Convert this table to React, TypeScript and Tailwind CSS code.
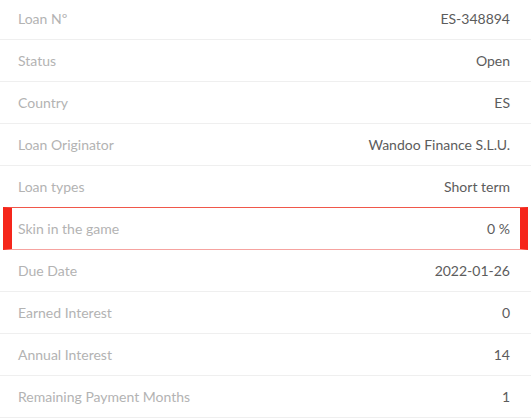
import React from 'react';

interface Row {
    label: string;
    value: string;
    highlight?: boolean;
}

const rows: Row[] = [
    { label: 'Loan Nº', value: 'ES-348894' },
    { label: 'Status', value: 'Open' },
    { label: 'Country', value: 'ES' },
    { label: 'Loan Originator', value: 'Wandoo Finance S.L.U.' },
    { label: 'Loan types', value: 'Short term' },
    { label: 'Skin in the game', value: '0 %', highlight: true },
    { label: 'Due Date', value: '2022-01-26' },
    { label: 'Earned Interest', value: '0' },
    { label: 'Annual Interest', value: '14' },
    { label: 'Remaining Payment Months', value: '1' },
];

export default function App() {
    return (
        <div className="h-[418px] w-[531px] overflow-hidden bg-white font-['Lato',sans-serif] text-[14px]">
            <div className="-mt-[2px] flex flex-col">
                {rows.map((row, i) => {
                    if (row.highlight) {
                        return (
                            <div
                                key={row.label}
                                className="mx-[3px] flex h-[43px] items-center justify-between border-[#f0574a] border-y border-l-[9px] border-r-[8px] border-b-[#f6a3a0] border-l-[#f5261b] border-r-[#f5261b] pl-[6px] pr-[10px]"
                            >
                                <span className="text-[#b3b3b3]">{row.label}</span>
                                <span className="text-[#5c5c5c]">{row.value}</span>
                            </div>
                        );
                    }
                    const beforeHighlight = rows[i + 1]?.highlight;
                    return (
                        <div
                            key={row.label}
                            className={
                                beforeHighlight
                                    ? 'flex h-[41px] items-center justify-between pl-[18px] pr-[21px]'
                                    : 'flex h-[42px] items-center justify-between border-b border-[#efefef] pl-[18px] pr-[21px]'
                            }
                        >
                            <span className="text-[#b3b3b3]">{row.label}</span>
                            <span className="text-[#5c5c5c]">{row.value}</span>
                        </div>
                    );
                })}
            </div>
        </div>
    );
}
